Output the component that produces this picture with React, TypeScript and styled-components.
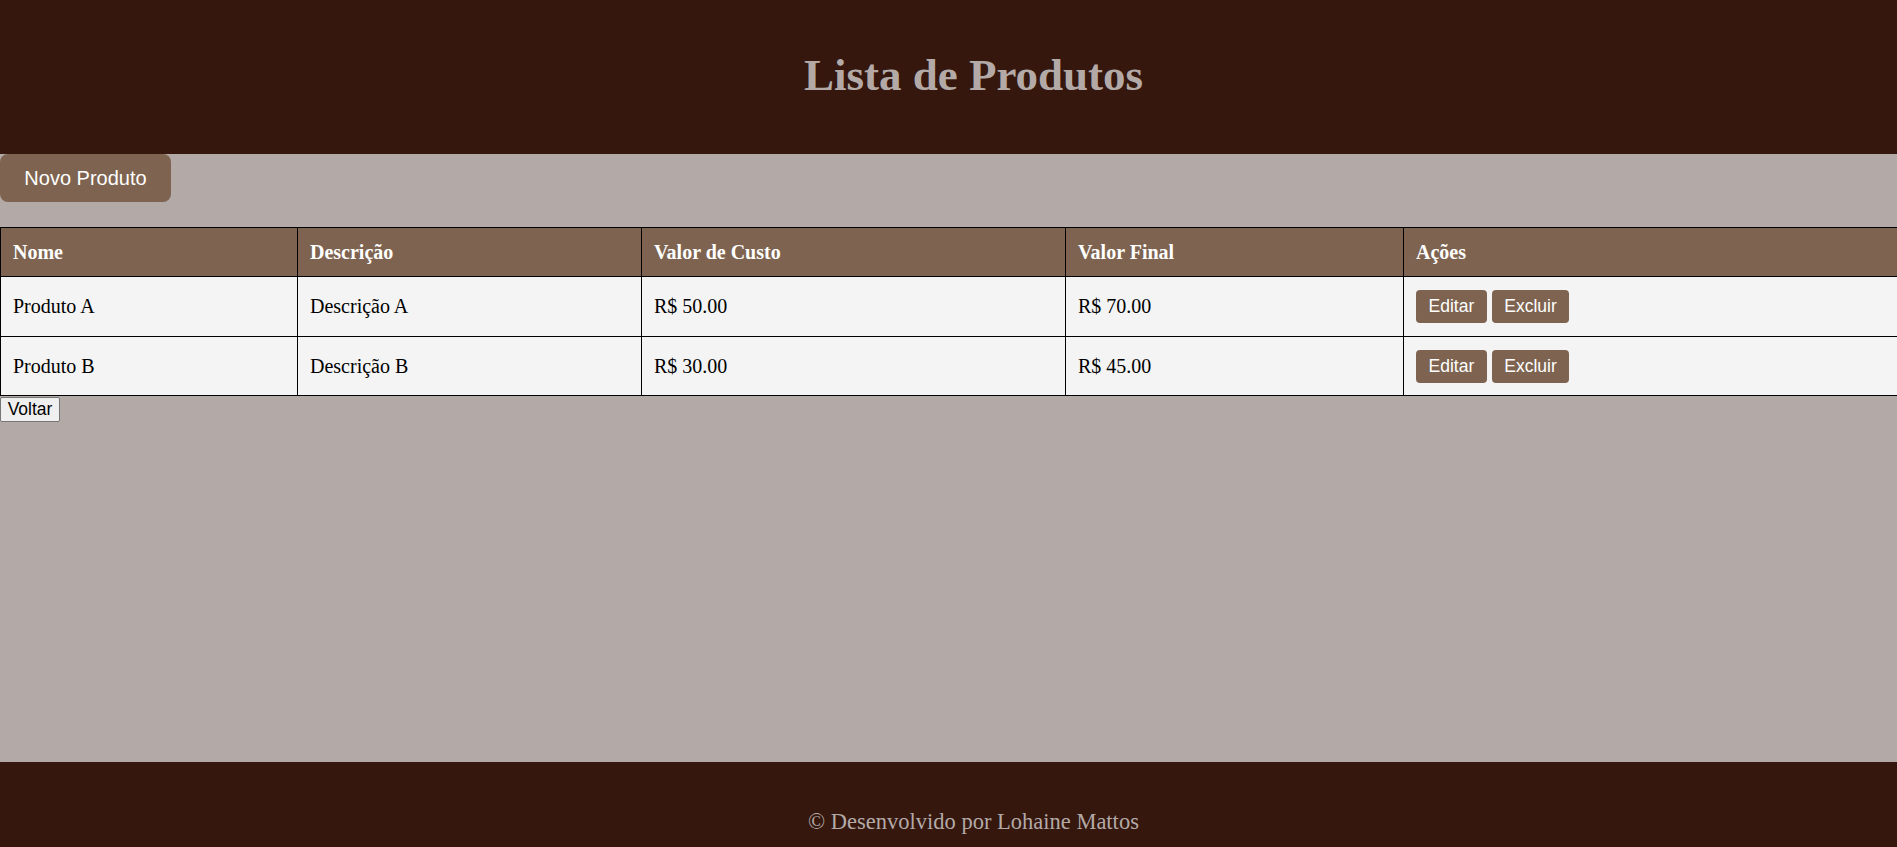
import React from "react";
import styled, { createGlobalStyle } from "styled-components";

const GlobalStyle = createGlobalStyle`
  html, body {
    margin: 0;
    padding: 0;
    overflow-x: hidden;
  }
  body {
    font-family: "Liberation Serif", "Times New Roman", serif;
    background: #b3aaa7;
  }
  * { box-sizing: border-box; }
`;

const Page = styled.div`
  display: flex;
  flex-direction: column;
  min-height: 100vh;
`;

const Header = styled.header`
  background: #35170e;
  height: 154px;
  padding: 49px 0 0 50px;
  text-align: center;
`;

const Title = styled.h1`
  margin: 0;
  font-family: "Liberation Serif", "Times New Roman", serif;
  font-size: 45px;
  font-weight: bold;
  line-height: normal;
  color: #b3aaa7;
`;

const Main = styled.main`
  display: flex;
  flex-direction: column;
  align-items: flex-start;
  min-height: 608px;
  background: #b3aaa7;
`;

const PrimaryButton = styled.button`
  background: #7e6450;
  color: #ffffff;
  border: none;
  border-radius: 8px;
  width: 171px;
  height: 48px;
  padding: 0;
  font-family: "Liberation Sans", Arial, sans-serif;
  font-size: 20px;
  cursor: pointer;
`;

const Table = styled.table`
  margin-top: 25px;
  width: calc(100% + 2px);
  border-collapse: collapse;
  table-layout: fixed;
  font-family: "Liberation Serif", "Times New Roman", serif;
  font-size: 20px;
`;

const HeadCell = styled.th<{ $w?: number }>`
  width: ${(p) => (p.$w ? `${p.$w}px` : "auto")};
  background: #7e6450;
  color: #ffffff;
  font-weight: bold;
  text-align: left;
  padding: 0 12px;
  height: 49px;
  border: 1px solid #000;
`;

const Row = styled.tr`
  background: #f4f4f4;
`;

const Cell = styled.td<{ $h: number }>`
  height: ${(p) => p.$h}px;
  padding: 0 12px;
  color: #000;
  border: 1px solid #000;
  vertical-align: middle;
`;

const Actions = styled.div`
  display: flex;
  gap: 5px;
`;

const ActionButton = styled.button`
  background: #7e6450;
  color: #ffffff;
  border: none;
  border-radius: 4px;
  height: 33px;
  padding: 0 12.5px;
  font-family: "Liberation Sans", Arial, sans-serif;
  font-size: 17.5px;
  cursor: pointer;
`;

const BackButton = styled.button`
  margin-top: 1px;
  background: #efefef;
  color: #000;
  border: 1px solid #767676;
  border-radius: 2px;
  height: 25px;
  width: 60px;
  padding: 0;
  font-family: "Liberation Sans", Arial, sans-serif;
  font-size: 17.5px;
  line-height: 1;
`;

const Footer = styled.footer`
  background: #35170e;
  padding: 47px 0 40px 50px;
  text-align: center;
  font-family: "Liberation Serif", "Times New Roman", serif;
  font-size: 22.5px;
  color: #b3aaa7;
`;

const products = [
  { nome: "Produto A", desc: "Descrição A", custo: "R$ 50.00", final: "R$ 70.00", h: 60 },
  { nome: "Produto B", desc: "Descrição B", custo: "R$ 30.00", final: "R$ 45.00", h: 59 },
];

export default function App() {
  return (
    <Page>
      <GlobalStyle />
      <Header>
        <Title>Lista de Produtos</Title>
      </Header>
      <Main>
        <PrimaryButton>Novo Produto</PrimaryButton>
        <Table>
          <thead>
            <tr>
              <HeadCell $w={297}>Nome</HeadCell>
              <HeadCell $w={344}>Descrição</HeadCell>
              <HeadCell $w={424}>Valor de Custo</HeadCell>
              <HeadCell $w={338}>Valor Final</HeadCell>
              <HeadCell>Ações</HeadCell>
            </tr>
          </thead>
          <tbody>
            {products.map((p) => (
              <Row key={p.nome}>
                <Cell $h={p.h}>{p.nome}</Cell>
                <Cell $h={p.h}>{p.desc}</Cell>
                <Cell $h={p.h}>{p.custo}</Cell>
                <Cell $h={p.h}>{p.final}</Cell>
                <Cell $h={p.h}>
                  <Actions>
                    <ActionButton>Editar</ActionButton>
                    <ActionButton>Excluir</ActionButton>
                  </Actions>
                </Cell>
              </Row>
            ))}
          </tbody>
        </Table>
        <BackButton>Voltar</BackButton>
      </Main>
      <Footer>© Desenvolvido por Lohaine Mattos</Footer>
    </Page>
  );
}
